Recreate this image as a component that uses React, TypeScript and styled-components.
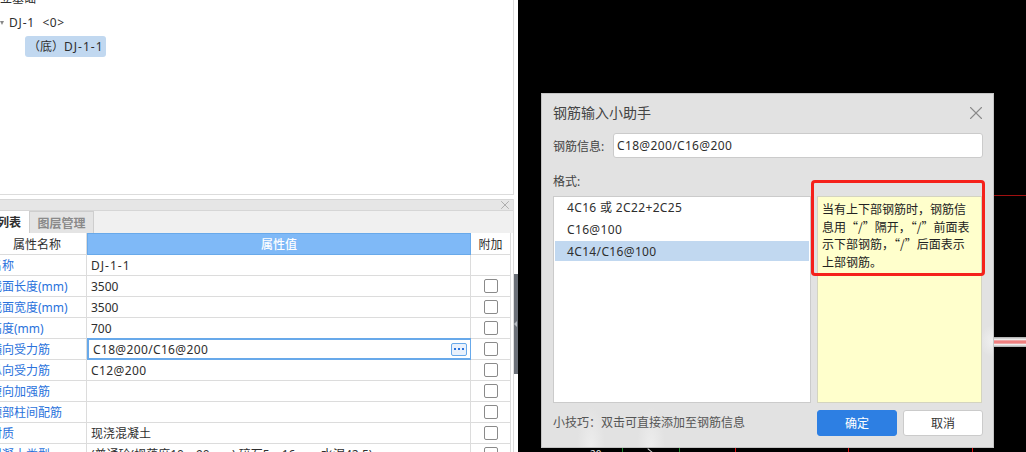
import { createGlobalStyle } from 'styled-components';
import styled from 'styled-components';
import { X } from 'lucide-react';

const rows = [
    { label: '名称', value: 'DJ-1-1', check: false, track: 1 },
    { label: '截面长度(mm)', value: '3500', check: true },
    { label: '截面宽度(mm)', value: '3500', check: true },
    { label: '高度(mm)', value: '700', check: true },
    { label: '横向受力筋', value: 'C18@200/C16@200', check: true, editing: true, track: 0.35 },
    { label: '纵向受力筋', value: 'C12@200', check: true, track: 0.4 },
    { label: '短向加强筋', value: '', check: true },
    { label: '顶部柱间配筋', value: '', check: true },
    { label: '材质', value: '现浇混凝土', check: true },
    { label: '混凝土类型', value: '(普通砼(坍落度10～90mm) 碎石5～16mm 水泥42.5)', check: true },
];

const formats = ['4C16 或 2C22+2C25', 'C16@100', '4C14/C16@100'];
const ticks = [
    { x: 622, color: '#1f8a2e' },
    { x: 679, color: '#1f8a2e' },
    { x: 735, color: '#e01010' },
    { x: 848, color: '#e01010' },
    { x: 972, color: '#e01010' },
];

function App() {
    return (
        <Page>
            <GlobalStyle />
            <LeftPane>
                <TreePanel>
                    <TreeRoot>独立基础</TreeRoot>
                    <TreeNode>
                        <Caret />
                        <Latin $track={0.8}>DJ-1</Latin>
                        <Latin $track={0.6}>&nbsp;&nbsp;&lt;0&gt;</Latin>
                    </TreeNode>
                    <TreeChip>
                        （底）<Latin $track={1}>DJ-1-1</Latin>
                    </TreeChip>
                </TreePanel>
                <PropertyPanel>
                    <PanelBar>
                        <X size={14} strokeWidth={1.4} color="#a0a0a0" />
                    </PanelBar>
                    <TabStrip>
                        <Tab $active>构件列表</Tab>
                        <Tab>图层管理</Tab>
                    </TabStrip>
                    <Table>
                        <HeadRow>
                            <HeadCell $shift>属性名称</HeadCell>
                            <HeadCell $accent>属性值</HeadCell>
                            <HeadCell>附加</HeadCell>
                        </HeadRow>
                        {rows.map((row) => (
                            <Row key={row.label}>
                                <NameCell>{row.label}</NameCell>
                                {row.editing ? (
                                    <EditCell>
                                        <Latin $track={row.track}>{row.value}</Latin>
                                        <MoreButton>
                                            <i />
                                            <i />
                                            <i />
                                        </MoreButton>
                                    </EditCell>
                                ) : (
                                    <ValueCell>
                                        <Latin $track={row.track}>{row.value}</Latin>
                                    </ValueCell>
                                )}
                                <CheckCell>{row.check && <CheckBox />}</CheckCell>
                            </Row>
                        ))}
                    </Table>
                </PropertyPanel>
                <Splitter>
                    <SplitGrip />
                </Splitter>
            </LeftPane>
            <CadPane>
                <CadLine />
                <CadBand />
                {ticks.map((tick) => (
                    <CadTick key={tick.x} $x={tick.x - 518} $color={tick.color} />
                ))}
                <CadLabel>20</CadLabel>
                <CadMark />
                <Dialog>
                    <DialogHead>
                        <DialogTitle>钢筋输入小助手</DialogTitle>
                        <CloseIcon>
                            <X size={22} strokeWidth={1.2} color="#8a8a8a" />
                        </CloseIcon>
                    </DialogHead>
                    <InfoRow>
                        <FieldLabel>钢筋信息:</FieldLabel>
                        <Input>
                            <Latin $track={0.35}>C18@200/C16@200</Latin>
                        </Input>
                    </InfoRow>
                    <FormatLabel>格式:</FormatLabel>
                    <Columns>
                        <FormatList>
                            {formats.map((format, i) => (
                                <FormatItem key={format} $selected={i === 2}>
                                    <Latin $track={0.35}>{format}</Latin>
                                </FormatItem>
                            ))}
                        </FormatList>
                        <Note>
                            当有上下部钢筋时，钢筋信
                            <br />
                            息用“/”隔开，“/”前面表
                            <br />
                            示下部钢筋，“/”后面表示
                            <br />
                            上部钢筋。
                        </Note>
                    </Columns>
                    <Footer>
                        <Tip>小技巧：双击可直接添加至钢筋信息</Tip>
                        <Buttons>
                            <Button $primary>确定</Button>
                            <Button>取消</Button>
                        </Buttons>
                    </Footer>
                </Dialog>
                <Highlight />
            </CadPane>
        </Page>
    );
}

export default App;

const GlobalStyle = createGlobalStyle`
    html, body {
        margin: 0;
        padding: 0;
        background: #000;
    }
    * {
        box-sizing: border-box;
    }
`;

const Page = styled.div`
    display: flex;
    width: 1026px;
    height: 452px;
    overflow: hidden;
    font-family: 'Noto Sans', 'Noto Sans CJK SC', sans-serif;
    font-size: 12px;
    color: #2e2e2e;
`;

const Latin = styled.span<{ $track?: number }>`
    letter-spacing: ${(props) => props.$track || 0}px;
    white-space: pre;
`;

const LeftPane = styled.div`
    position: relative;
    display: flex;
    flex-direction: column;
    width: 518px;
    height: 452px;
    background: #fff;
    overflow: hidden;
`;

const TreePanel = styled.div`
    height: 195px;
    width: 514px;
    flex-shrink: 0;
    border-bottom: 1px solid #dcdcdc;
    border-right: 1px solid #dcdcdc;
    overflow: hidden;
`;

const TreeRoot = styled.div`
    height: 14px;
    margin-top: -8px;
    margin-left: -12px;
    line-height: 14px;
`;

const TreeNode = styled.div`
    display: flex;
    align-items: center;
    height: 20px;
    margin-top: 6px;
    padding-left: 9px;
    position: relative;
    white-space: pre;
`;

const Caret = styled.span`
    position: absolute;
    left: 0;
    top: 9px;
    border-left: 2.5px solid transparent;
    border-right: 2.5px solid transparent;
    border-top: 4px solid #888;
`;

const TreeChip = styled.div`
    display: flex;
    align-items: center;
    width: 81px;
    height: 21px;
    margin: 4px 0 0 25px;
    padding: 0 0 1px 3px;
    background: #c1d8f0;
    border-radius: 3px;
    white-space: nowrap;
`;

const PropertyPanel = styled.div`
    width: 514px;
    flex: 1;
    margin-top: 4px;
    border-right: 1px solid #dcdcdc;
    overflow: hidden;
`;

const PanelBar = styled.div`
    display: flex;
    align-items: center;
    justify-content: flex-end;
    height: 12px;
    padding-right: 1px;
    background: #e6e6e6;
    border-top: 1px solid #d6d6d6;
    border-bottom: 1px solid #d6d6d6;
`;

const TabStrip = styled.div`
    display: flex;
    justify-content: flex-start;
    height: 22px;
    background: #f0f0f0;
    overflow: hidden;
`;

const Tab = styled.div<{ $active?: boolean }>`
    display: flex;
    align-items: center;
    justify-content: center;
    height: 22px;
    font-weight: 700;
    white-space: nowrap;
    ${(props) =>
        props.$active
            ? `width: 59px; margin-left: -30px; padding-right: 5px; background: #fff; color: #2e2e2e;`
            : `width: 65px; background: #e4e4e4; color: #8a8a8a; border: 1px solid #cecece; border-bottom: none;`}
`;

const Table = styled.div`
    width: 524px;
    margin-left: -13px;
`;

const HeadRow = styled.div`
    display: grid;
    grid-template-columns: 100px 384px 40px;
    height: 22px;
`;

const Row = styled(HeadRow)`
    height: 21px;
`;

const HeadCell = styled.div<{ $accent?: boolean; $shift?: boolean }>`
    display: flex;
    align-items: center;
    justify-content: center;
    padding-left: ${(props) => (props.$shift ? '1px' : '0')};
    border-right: 1px solid #dcdcdc;
    border-bottom: 1px solid #dcdcdc;
    ${(props) =>
        props.$accent &&
        `background: #7fb9f7; color: #fff; border: 1px solid #68a9ea; font-weight: 500;`}
`;

const NameCell = styled.div`
    display: flex;
    align-items: center;
    padding-left: 3px;
    color: #2a72dc;
    white-space: nowrap;
    border-right: 1px solid #dcdcdc;
    border-bottom: 1px solid #dcdcdc;
`;

const ValueCell = styled.div`
    display: flex;
    align-items: center;
    padding-left: 4px;
    white-space: nowrap;
    overflow: hidden;
    border-right: 1px solid #dcdcdc;
    border-bottom: 1px solid #dcdcdc;
`;

const EditCell = styled.div`
    display: flex;
    align-items: center;
    justify-content: space-between;
    padding: 0 3px 0 4px;
    margin-top: -1px;
    height: 22px;
    border: 2px solid #68a9ea;
    border-right-width: 1.5px;
`;

const MoreButton = styled.span`
    display: flex;
    align-items: center;
    justify-content: center;
    gap: 2px;
    width: 16px;
    height: 13px;
    background: #e9f1fc;
    border: 1px solid #68a9ea;
    border-radius: 2px;
    i {
        width: 2px;
        height: 2px;
        background: #2a72dc;
    }
`;

const CheckCell = styled.div`
    display: flex;
    align-items: center;
    justify-content: center;
    border-right: 1px solid #dcdcdc;
    border-bottom: 1px solid #dcdcdc;
`;

const CheckBox = styled.span`
    width: 14px;
    height: 14px;
    background: #fff;
    border: 1px solid #8a8a8a;
    border-radius: 2px;
`;

const Splitter = styled.div`
    position: absolute;
    left: 514px;
    top: 274px;
    display: flex;
    align-items: center;
    width: 4px;
    height: 100px;
    background: #6b7078;
`;

const SplitGrip = styled.span`
    border-top: 3px solid transparent;
    border-bottom: 3px solid transparent;
    border-right: 3px solid #b8bcc2;
`;

const CadPane = styled.div`
    position: relative;
    flex: 1;
    height: 452px;
    background: #000;
`;

const CadLine = styled.div`
    position: absolute;
    left: 460px;
    top: 195px;
    width: 60px;
    height: 1px;
    background: #a01010;
`;

const CadBand = styled.div`
    position: absolute;
    left: 460px;
    top: 337px;
    width: 60px;
    height: 10px;
    background: linear-gradient(#a8a8a8, #eeeeee 25%, #f08080 40%, #f08080 60%, #eeeeee 75%, #a8a8a8);
`;

const CadTick = styled.div<{ $x: number; $color: string }>`
    position: absolute;
    left: ${(props) => props.$x}px;
    top: 446px;
    width: 1px;
    height: 6px;
    background: ${(props) => props.$color};
`;

const CadLabel = styled.span`
    position: absolute;
    left: 72px;
    top: 448px;
    color: #eee;
    font-size: 10px;
    line-height: 12px;
`;

const CadMark = styled.span`
    position: absolute;
    left: 129px;
    top: 450px;
    width: 6px;
    height: 1px;
    background: #ddd;
    transform: rotate(40deg);
`;

const Dialog = styled.div`
    position: absolute;
    left: 23px;
    top: 93px;
    display: flex;
    flex-direction: column;
    width: 453px;
    height: 355px;
    padding: 0 10px 0 11px;
    border: 1px solid #c4c4c4;
    background:
        radial-gradient(ellipse 14px 40px at 49px 100%, #ededed, transparent),
        radial-gradient(ellipse 14px 40px at 109px 100%, #ededed, transparent),
        radial-gradient(ellipse 14px 16px at 100% 247px, #f0f0f0, transparent),
        #e2e2e2;
`;

const DialogHead = styled.div`
    display: flex;
    align-items: center;
    justify-content: space-between;
    height: 39px;
`;

const DialogTitle = styled.div`
    font-size: 14px;
    line-height: 18px;
    margin-top: -2px;
    color: #444;
`;

const CloseIcon = styled.span`
    display: flex;
    margin: -2px -4px 0 0;
`;

const InfoRow = styled.div`
    display: flex;
    align-items: center;
    gap: 9px;
    height: 25px;
`;

const FieldLabel = styled.span`
    width: 51px;
    color: #444;
    white-space: nowrap;
`;

const Input = styled.div`
    flex: 1;
    display: flex;
    align-items: center;
    height: 25px;
    padding-left: 3px;
    background: #fff;
    border: 1px solid #cbcbcb;
    border-radius: 3px;
`;

const FormatLabel = styled.div`
    height: 18px;
    margin: 15px 0 5px;
    line-height: 18px;
    color: #444;
`;

const Columns = styled.div`
    display: grid;
    grid-template-columns: 258px 165px;
    gap: 6px;
    height: 207px;
`;

const FormatList = styled.div`
    display: flex;
    flex-direction: column;
    gap: 2px;
    padding: 0 1px;
    background: #fff;
    border: 1px solid #cbcbcb;
`;

const FormatItem = styled.div<{ $selected?: boolean }>`
    display: flex;
    align-items: center;
    height: 20px;
    padding-left: 12px;
    background: ${(props) => (props.$selected ? '#c1d8f0' : 'transparent')};
`;

const Note = styled.div`
    padding: 3px 4px;
    font-family: 'Noto Sans CJK SC', sans-serif;
    line-height: 17.5px;
    color: #222;
    white-space: nowrap;
    background: #ffffcc;
    border: 1px solid #d4d4c0;
`;

const Footer = styled.div`
    display: flex;
    align-items: flex-start;
    justify-content: space-between;
    margin-top: 7px;
`;

const Tip = styled.span`
    line-height: 26px;
    color: #555;
`;

const Buttons = styled.div`
    display: flex;
    gap: 6px;
`;

const Button = styled.div<{ $primary?: boolean }>`
    display: flex;
    align-items: center;
    justify-content: center;
    width: 80px;
    height: 26px;
    border-radius: 3px;
    color: ${(props) => (props.$primary ? '#fff' : '#333')};
    background: ${(props) => (props.$primary ? '#2d7fe3' : '#fff')};
    border: 1px solid ${(props) => (props.$primary ? '#2d7fe3' : '#cbcbcb')};
`;

const Highlight = styled.div`
    position: absolute;
    left: 293px;
    top: 180px;
    width: 174px;
    height: 96px;
    border: 3px solid #f5211b;
    border-radius: 4px;
`;
